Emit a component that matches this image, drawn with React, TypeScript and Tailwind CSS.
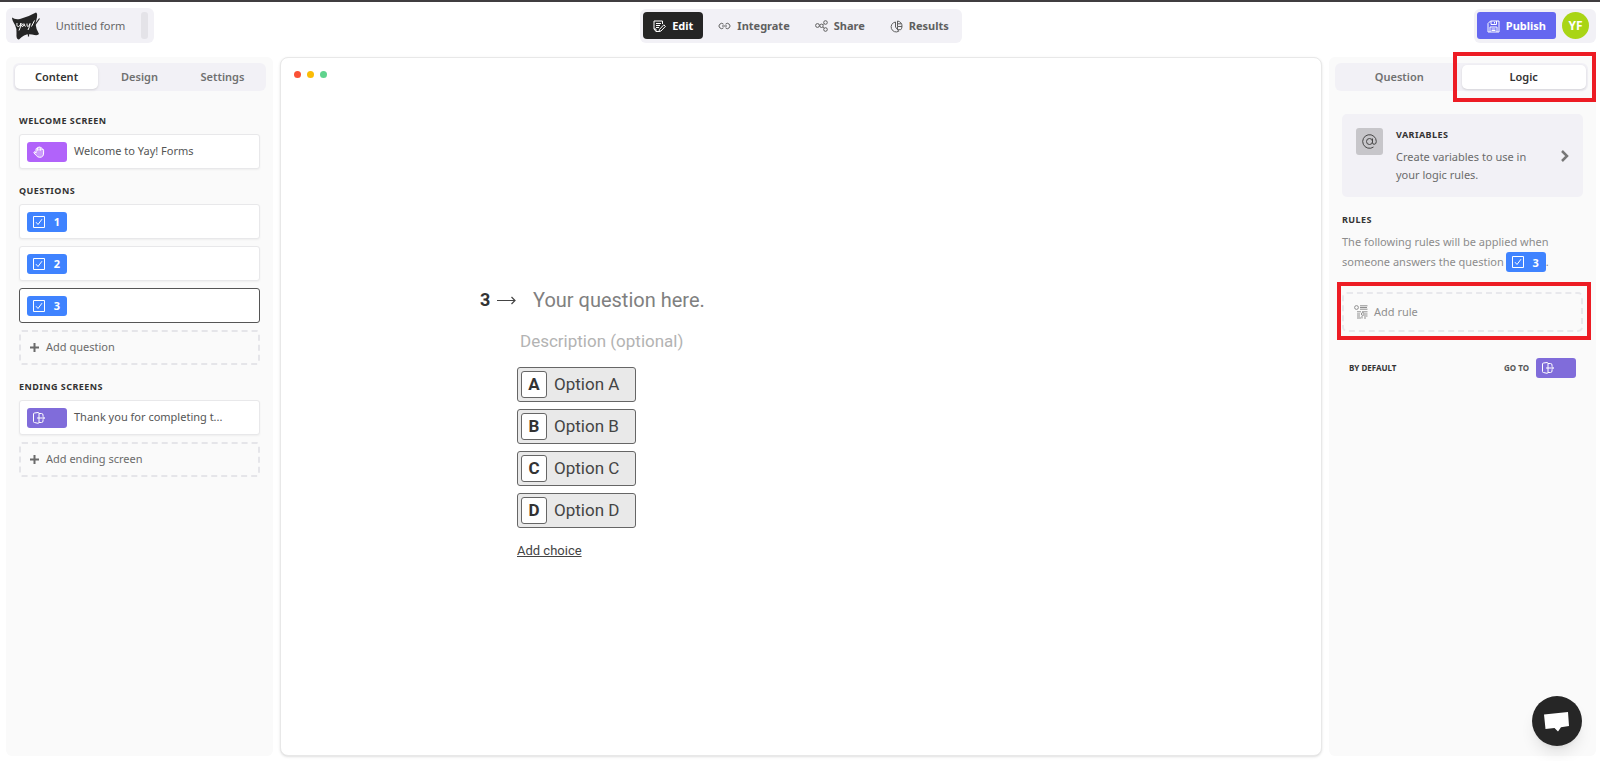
import type { ReactNode } from "react";

const stroke = { fill: "none", stroke: "currentColor", strokeWidth: 1 };

function Logo() {
  return (
    <svg viewBox="0 0 28 28" className="h-7 w-7 shrink-0" aria-label="Yay! Forms">
      <path d="M0 5.500Q3 8 8 7Q16 5 24 .5Q26 1 24.500 7.500L23.500 12Q24 17 27 22Q26 24 20 22.500Q13 21 7 27.500Q4 28 4.500 21Q5 17 3 13Q0 8 0 5.500Z" fill="#252525" />
      <path
        d="M5 11q-.5 4 1.500 3.500q2-.5 2.500-3.500q0 4-2 7.500M12.500 12q-3-.5-3 2q1 2 3-1.500q0 2 1 2M15 11.500q-.5 3 1 3q1.500-.5 2-3q0 3-2 6.500"
        fill="none"
        stroke="#fff"
        strokeWidth="1"
      />
      <path d="M27.500 6.500L20 17M16.500 20v4.500" stroke="#252525" strokeWidth="1.200" />
      <path d="M22.500 8.500L19.500 14.500" stroke="#fff" strokeWidth="1" />
    </svg>
  );
}

function EditIcon() {
  return (
    <svg viewBox="0 0 13 13" className="h-[13px] w-[13px]" {...stroke}>
      <path d="M9.500 4V1H1v8l2 2.500h3M1 9h2v2.500M3 3.500h5M3 5.500h4M3 7.500h3" />
      <path d="M10.800 4.800l1.600 1.600-4.400 4.600-2 .6.500-2.200z" />
    </svg>
  );
}

function LinkIcon() {
  return (
    <svg viewBox="0 0 13 13" className="h-[13px] w-[13px]" {...stroke}>
      <path d="M5.500 7.800A2.600 2.600 0 1 1 5.500 4.200M7.500 4.200A2.600 2.600 0 1 1 7.500 7.800M4 6h5" />
    </svg>
  );
}

function ShareIcon() {
  return (
    <svg viewBox="0 0 13 13" className="h-[13px] w-[13px]" {...stroke}>
      <circle cx="2.500" cy="5.500" r="1.900" />
      <circle cx="6.500" cy="5.800" r="1.700" />
      <circle cx="10.500" cy="2.500" r="1.800" />
      <circle cx="10.500" cy="9.500" r="1.800" />
      <path d="M7.800 4.800L9 3.600M7.800 7l1.300 1.300" />
    </svg>
  );
}

function ChartIcon() {
  return (
    <svg viewBox="0 0 13 13" className="h-[13px] w-[13px]" {...stroke}>
      <path d="M5.500 2A5 5 0 1 0 8.800 11.200L5.500 7z" />
      <path d="M7.500 1v5.500H12A5 5 0 0 0 7.500 1zM7.500 6.500v3.200h3.300A5 5 0 0 0 12 6.500M7.500 3.800h4" />
    </svg>
  );
}

function SaveIcon() {
  return (
    <svg viewBox="0 0 13 13" className="h-[13px] w-[13px]" {...stroke}>
      <path d="M1 3.500L3.500 1H12v11H1zM4 1v3.500h5.500V1M7.500 2v1.500M3 12V7h7v5M4.500 9h4M4.500 10.500h4" />
    </svg>
  );
}

function HandIcon() {
  return (
    <svg viewBox="0 0 12 12" className="h-3 w-3" fill="none" stroke="currentColor" strokeWidth="1">
      <path
        d="M3 7V3.200q0-.8.7-.8t.7.800V2q0-.8.800-.8t.8.800v-.3q0-.8.800-.8t.8.800V2.500q0-.7.700-.7t.8.700V4q.1-.7.800-.7t.7.800V7q0 4.300-3.800 4.300Q4.500 11.300 3.300 9.500L1 7q-.3-.8.300-1.200t1.700 1.200z"
        fill="currentColor"
        fillOpacity="0.350"
      />
      <path d="M4.400 3.200v1.500M6 2.500v2M7.600 3v1.700" />
    </svg>
  );
}

function CheckIcon() {
  return (
    <svg viewBox="0 0 12 12" className="h-3 w-3" {...stroke}>
      <path d="M.5.500h11v11H.5zM3 6.200l2 2.300 4-5.300" />
    </svg>
  );
}

function ExitIcon() {
  return (
    <svg viewBox="0 0 12 12" className="h-3 w-3" {...stroke}>
      <path d="M6 1.500Q6 .5 5 .5L1.500 1Q.5 1 .5 2v7.500q0 1 1 1l3.500.8q1 0 1-1zM6 1.500h2.500q1.500 0 1.500 1.500v1M10 8v1q0 1.500-1.500 1.500H6M4 6h7.500M9.800 4.200L11.500 6 9.800 7.800" />
    </svg>
  );
}

function RuleIcon() {
  return (
    <svg viewBox="0 0 14 14" className="h-3.5 w-3.5" {...stroke}>
      <circle cx="2.500" cy="2.500" r="1.900" />
      <path d="M6 .8h7.500M6 2.500h7M6 4.200h7.500M3 6.800h4M3 9h3M3 11h3M3 13h4M8 6.800h5.500M11 9h2.500M8 13.500v-2.500M10 11h3.500M10 13h2" />
      <circle cx="8.800" cy="9" r="1.400" />
    </svg>
  );
}

function PlusIcon() {
  return (
    <svg viewBox="0 0 9 9" className="h-[9px] w-[9px]" fill="none" stroke="currentColor" strokeWidth="2">
      <path d="M4.500 0v9M0 4.500h9" />
    </svg>
  );
}

function Badge({ color, icon, label }: { color: string; icon: ReactNode; label?: string }) {
  return (
    <span className={`inline-flex h-5 w-10 shrink-0 items-center rounded-[3px] pr-[7px] pl-1.5 text-[11px] font-bold text-white ${color}`}>
      {icon}
      {label && <span className="ml-auto leading-none">{label}</span>}
    </span>
  );
}

function SectionTitle({ children }: { children: ReactNode }) {
  return <h2 className="text-[9px] leading-4 font-bold tracking-wider text-[#333]">{children}</h2>;
}

function ScreenCard({ active, children }: { active?: boolean; children: ReactNode }) {
  return (
    <button
      className={`flex h-[35px] w-full items-center gap-[7px] rounded-[3px] border bg-white px-[7px] text-left text-[11px] text-[#555] ${active ? "border-[#555]" : "border-[#e8e8ea] shadow-xs"}`}
    >
      {children}
    </button>
  );
}

function AddButton({ children }: { children: ReactNode }) {
  return (
    <button className="flex h-[35px] w-full items-center gap-[7px] rounded-[3px] border-2 border-dashed border-[#e5e5e9] px-[9px] text-[11px] text-[#6b6b6b]">
      <PlusIcon />
      {children}
    </button>
  );
}

function Tabs({ items, active }: { items: string[]; active: string }) {
  return (
    <div className="flex h-7 rounded-md bg-[#f2f1f6] p-0.5 text-[11px] font-semibold">
      {items.map((item) => (
        <button
          key={item}
          className={`flex-1 rounded-[5px] pt-px ${item === active ? "bg-white text-[#333] shadow-sm" : "text-[#707070]"}`}
        >
          {item}
        </button>
      ))}
    </div>
  );
}

const navItems = [
  { label: "Edit", icon: <EditIcon />, active: true },
  { label: "Integrate", icon: <LinkIcon /> },
  { label: "Share", icon: <ShareIcon /> },
  { label: "Results", icon: <ChartIcon /> },
];

function Header() {
  return (
    <header className="grid grid-cols-[1fr_auto_1fr] items-center pt-1.5 pr-1 pl-1.5">
      <div className="flex h-[35px] w-[148px] items-center justify-between rounded-md bg-[#f2f1f6] px-1.5">
        <Logo />
        <span className="pt-px text-[11px] text-[#666]">Untitled form</span>
        <span className="h-[27px] w-[7px] rounded-[3px] bg-[#e4e3e8]" />
      </div>
      <nav className="flex h-[34px] items-center gap-[5px] rounded-md bg-[#f2f1f6] px-[3px] text-[11px] font-bold">
        {navItems.map(({ label, icon, active }) => (
          <button
            key={label}
            className={`flex h-[27px] items-center gap-1.5 rounded px-2.5 pt-px ${active ? "bg-[#252525] text-white" : "text-[#5f5f5f]"}`}
          >
            {icon}
            {label}
          </button>
        ))}
      </nav>
      <div className="flex h-[34px] items-center gap-1.5 justify-self-end rounded-md bg-[#f2f1f6] pr-[7px] pl-[3px] text-[11px] font-bold text-white">
        <button className="flex h-[27px] items-center gap-1.5 rounded-[3px] bg-[#6467f0] px-2.5 pt-px">
          <SaveIcon />
          Publish
        </button>
        <button className="h-[27px] w-[27px] rounded-full bg-[#a9d515] pt-px text-xs">YF</button>
      </div>
    </header>
  );
}

function ContentPanel() {
  return (
    <aside className="w-[267px] shrink-0 rounded-md bg-[#fafafa] px-[7px] pt-1.5">
      <Tabs items={["Content", "Design", "Settings"]} active="Content" />
      <div className="flex flex-col gap-[14px] px-1.5 pt-[22px]">
        <div className="flex flex-col gap-[5px]">
          <SectionTitle>WELCOME SCREEN</SectionTitle>
          <ScreenCard>
            <Badge color="bg-[#b163fa]" icon={<HandIcon />} />
            Welcome to Yay! Forms
          </ScreenCard>
        </div>
        <div className="flex flex-col gap-[5px]">
          <SectionTitle>QUESTIONS</SectionTitle>
          <div className="flex flex-col gap-[7px]">
            {["1", "2", "3"].map((n) => (
              <ScreenCard key={n} active={n === "3"}>
                <Badge color="bg-[#3f83ff]" icon={<CheckIcon />} label={n} />
              </ScreenCard>
            ))}
            <AddButton>Add question</AddButton>
          </div>
        </div>
        <div className="flex flex-col gap-[5px]">
          <SectionTitle>ENDING SCREENS</SectionTitle>
          <div className="flex flex-col gap-[7px]">
            <ScreenCard>
              <Badge color="bg-[#806cda]" icon={<ExitIcon />} />
              Thank you for completing t...
            </ScreenCard>
            <AddButton>Add ending screen</AddButton>
          </div>
        </div>
      </div>
    </aside>
  );
}

function Preview() {
  return (
    <main className="flex flex-1 flex-col rounded-lg border border-[#e8e8e8] bg-white shadow-sm">
      <div className="flex gap-1.5 px-[13px] pt-[13px]">
        <span className="h-[7px] w-[7px] rounded-full bg-[#fa5136]" />
        <span className="h-[7px] w-[7px] rounded-full bg-[#fbbc05]" />
        <span className="h-[7px] w-[7px] rounded-full bg-[#5fd38d]" />
      </div>
      <div className="mx-auto flex w-[642px] flex-1 flex-col justify-center pt-[15px] font-[Roboto,sans-serif] text-[#444]">
        <div className="flex items-center">
          <span className="w-[17px] text-lg font-bold text-[#333]">3</span>
          <svg viewBox="0 0 19 9" className="h-[9px] w-[19px]" fill="none" stroke="#444" strokeWidth="1.200">
            <path d="M0 4.500h18M14.500 1l3.500 3.500L14.500 8" />
          </svg>
          <h1 className="pl-[17px] text-xl leading-7 text-[#808080]">Your question here.</h1>
        </div>
        <div className="pl-[37px]">
          <p className="mt-[15px] pl-[3px] text-[17px] leading-6 text-[#b3b3b3]">Description (optional)</p>
          <div className="mt-[14px] flex w-[119px] flex-col gap-[7px]">
            {["A", "B", "C", "D"].map((letter) => (
              <button
                key={letter}
                className="flex h-[35px] items-center gap-[7px] rounded-[3px] border border-[#666] bg-[#e9e9e9] px-[3px] text-[17px]"
              >
                <span className="flex h-[27px] w-[26px] items-center justify-center rounded-[3px] border border-[#666] bg-white font-bold text-[#333]">
                  {letter}
                </span>
                Option {letter}
              </button>
            ))}
          </div>
          <button className="mt-[13px] text-[13px] leading-5 underline">Add choice</button>
        </div>
      </div>
    </main>
  );
}

function LogicPanel() {
  return (
    <aside className="w-[267px] shrink-0 rounded-md bg-[#fafafa] px-1.5 pt-1.5">
      <div className="relative mr-0.5">
        <Tabs items={["Question", "Logic"]} active="Logic" />
        <div className="pointer-events-none absolute -top-[11px] -right-2 h-[50px] w-[143px] border-4 border-[#ed1c24]" />
      </div>
      <div className="px-[7px]">
        <button className="mt-[23px] flex h-[83px] w-full rounded-[5px] bg-[#f2f1f6] px-[14px] pt-3.5 text-left">
          <span className="flex h-[27px] w-[27px] items-center justify-center rounded-[3px] bg-[#c7c6ca] text-[#444]">
            <svg viewBox="0 0 15 15" className="h-[15px] w-[15px]" {...stroke}>
              <circle cx="7.500" cy="7.500" r="3" />
              <path d="M10.500 4.500v4q0 1.800 1.600 1.800Q14.300 10.300 14.300 7.500A6.800 6.800 0 1 0 11.500 13" />
            </svg>
          </span>
          <span className="flex-1 pl-[13px]">
            <span className="block text-[9px] leading-[14px] font-bold tracking-wider text-[#333]">VARIABLES</span>
            <span className="mt-1.5 block text-[11px] leading-[18px] text-[#6b6b6b]">
              Create variables to use in
              <br />
              your logic rules.
            </span>
          </span>
          <svg viewBox="0 0 8 12" className="mt-[22px] h-3 w-2" fill="none" stroke="#777" strokeWidth="2.500">
            <path d="M1 1l5 5-5 5" />
          </svg>
        </button>
        <div className="mt-[15px]">
          <SectionTitle>RULES</SectionTitle>
          <div className="mt-1 text-[11px] leading-5 text-[#8c8c8c]">
            <p>The following rules will be applied when</p>
            <p className="flex items-center">
              someone answers the question
              <span className="ml-0.5 flex">
                <Badge color="bg-[#3f83ff]" icon={<CheckIcon />} label="3" />
              </span>
              .
            </p>
          </div>
        </div>
        <div className="relative mt-5">
          <button className="flex h-10 w-full items-center gap-1.5 rounded-[5px] border-2 border-dashed border-[#e8e8ec] px-2.5 text-[11px] text-[#8f8f8f]">
            <RuleIcon />
            Add rule
          </button>
          <div className="pointer-events-none absolute -top-[10px] -right-2 -bottom-2 -left-[5px] border-4 border-[#ed1c24]" />
        </div>
        <div className="mt-[26px] flex items-center px-[7px] text-[8px] font-bold text-[#333]">
          BY DEFAULT
          <span className="mr-[7px] ml-auto text-[#555]">GO TO</span>
          <Badge color="bg-[#806cda]" icon={<ExitIcon />} />
        </div>
      </div>
    </aside>
  );
}

export default function App() {
  return (
    <div className="flex min-h-screen flex-col border-t-2 border-[#403d40] bg-white font-['Noto_Sans',sans-serif]">
      <Header />
      <div className="mt-3.5 flex flex-1 gap-[7px] pr-1 pb-[5px] pl-1.5">
        <ContentPanel />
        <Preview />
        <LogicPanel />
      </div>
      <button aria-label="Open chat" className="fixed right-[18px] bottom-[15px] h-[50px] w-[50px] rounded-full bg-[#262626] shadow-lg">
        <svg viewBox="0 0 50 50" className="h-full w-full" fill="#fff">
          <path d="M12 18.500L36 16l1 14-8 1.200-3 4.300-3.500-3.500-9 1z" />
        </svg>
      </button>
    </div>
  );
}
